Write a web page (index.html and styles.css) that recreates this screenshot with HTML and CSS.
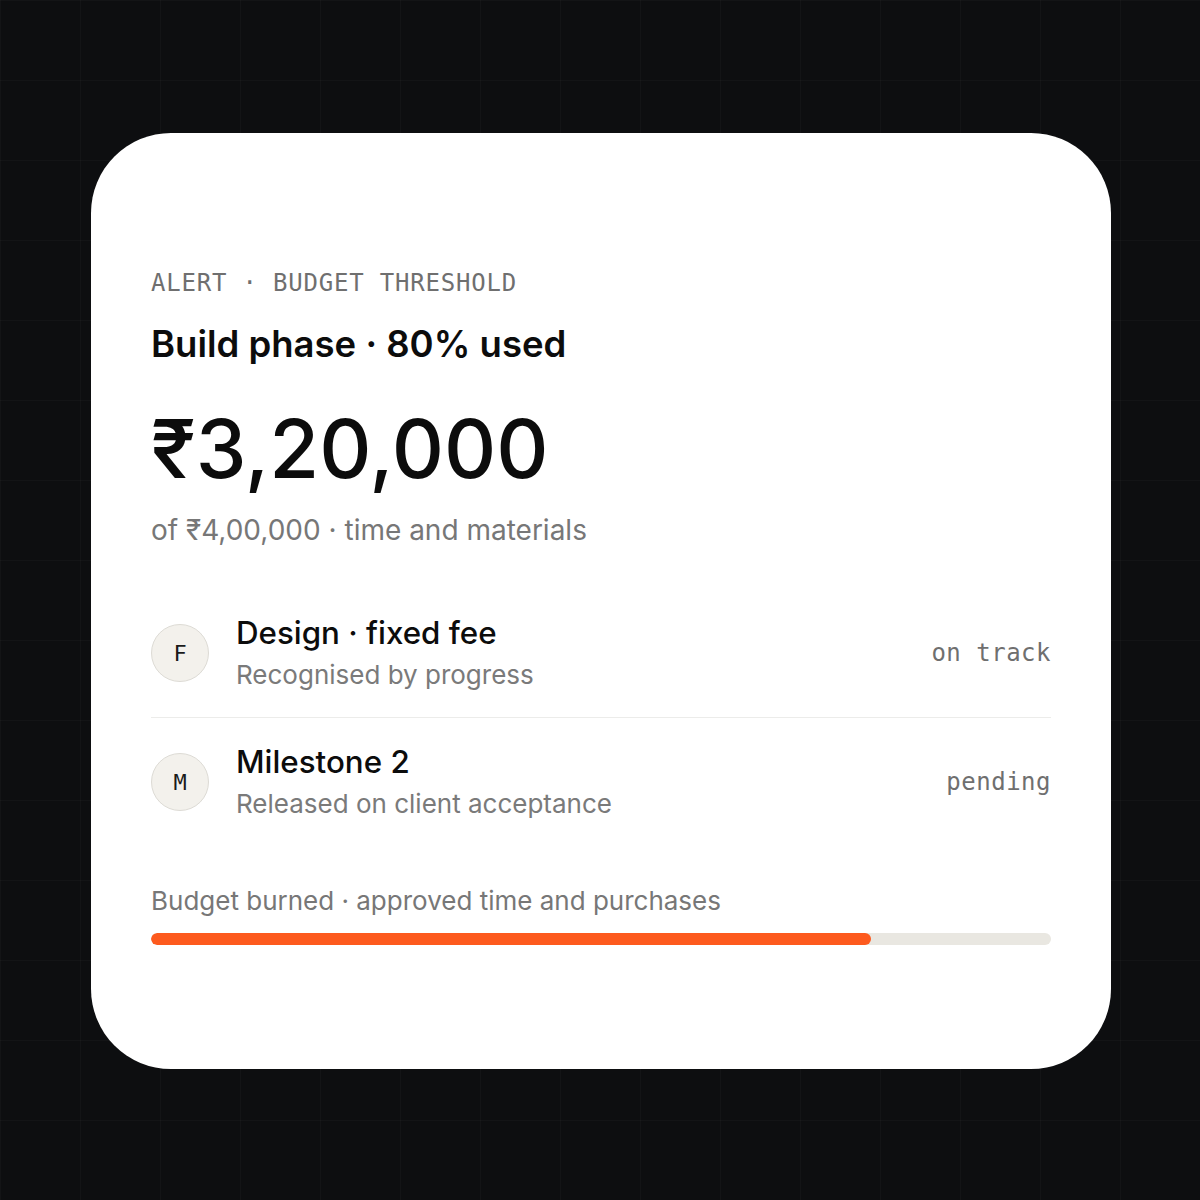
FILE: index.html
```html
<!DOCTYPE html>
<html lang="en">
<head>
<meta charset="utf-8">
<title>Budget threshold alert</title>
<link rel="stylesheet" href="styles.css">
</head>
<body>
<main class="card">
  <div class="eyebrow">ALERT · BUDGET THRESHOLD</div>
  <h1 class="title">Build phase · 80% used</h1>
  <div class="amount">₹3,20,000</div>
  <div class="sub">of ₹4,00,000 · time and materials</div>
  <ul class="rows">
    <li class="row">
      <span class="avatar">F</span>
      <div class="row-text">
        <div class="row-title">Design · fixed fee</div>
        <div class="row-sub">Recognised by progress</div>
      </div>
      <span class="status">on track</span>
    </li>
    <li class="row">
      <span class="avatar">M</span>
      <div class="row-text">
        <div class="row-title">Milestone 2</div>
        <div class="row-sub">Released on client acceptance</div>
      </div>
      <span class="status">pending</span>
    </li>
  </ul>
  <div class="bar-label">Budget burned · approved time and purchases</div>
  <div class="bar"><div class="bar-fill" style="width:80%"></div></div>
</main>
</body>
</html>
```
FILE: styles.css
```css
* { box-sizing: border-box; }
html, body { margin: 0; padding: 0; }
body {
  min-height: 100vh;
  padding: 2px 0 0 2px;
  background-color: #0d0e10;
  background-image:
    linear-gradient(to right, rgba(255,255,255,0.025) 1px, transparent 1px),
    linear-gradient(to bottom, rgba(255,255,255,0.025) 1px, transparent 1px);
  background-size: 80px 80px;
  display: flex;
  align-items: center;
  justify-content: center;
  font-family: Inter, "Noto Sans", sans-serif;
}
.card {
  width: 1020px;
  height: 936px;
  background: #ffffff;
  border-radius: 80px;
  padding: 136px 60px 0 60px;
  display: flex;
  flex-direction: column;
}
.eyebrow {
  font-family: "DejaVu Sans Mono", monospace;
  font-size: 24px;
  line-height: 28px;
  letter-spacing: 0.8px;
  color: #6f6f6f;
}
.title {
  margin: 25px 0 0 0;
  font-size: 36.5px;
  line-height: 44px;
  font-weight: 600;
  color: #0c0c0c;
}
.amount {
  margin-top: 35px;
  font-size: 81px;
  line-height: 96px;
  font-weight: 500;
  color: #0c0c0c;
}
.sub {
  margin-top: 15px;
  font-size: 28px;
  line-height: 36px;
  color: #777777;
}
.rows {
  list-style: none;
  margin: 41px 0 0 0;
  padding: 0;
}
.row {
  display: flex;
  align-items: center;
  gap: 27px;
  padding: 25px 0;
}
.row + .row { border-top: 1px solid #ececea; }
.avatar {
  width: 58px;
  height: 58px;
  flex: none;
  border-radius: 50%;
  background: #f3f1ec;
  border: 1.5px solid #dddbd5;
  display: flex;
  align-items: center;
  justify-content: center;
  font-family: "DejaVu Sans Mono", monospace;
  font-size: 22px;
  color: #1a1a1a;
}
.row-text { flex: 1; }
.row-title {
  font-size: 31.3px;
  line-height: 38px;
  font-weight: 500;
  color: #0c0c0c;
}
.row-sub {
  margin-top: 6px;
  font-size: 26px;
  line-height: 34px;
  color: #7a7a7a;
}
.status {
  font-family: "DejaVu Sans Mono", monospace;
  font-size: 24px;
  letter-spacing: 0.5px;
  color: #6f6f6f;
}
.bar-label {
  margin-top: 38px;
  font-size: 26px;
  line-height: 34px;
  color: #777777;
}
.bar {
  margin-top: 15px;
  height: 12px;
  border-radius: 6px;
  background: #e9e7e1;
  overflow: hidden;
}
.bar-fill {
  height: 100%;
  background: #fd5a1e;
  border-radius: 6px;
}
```
